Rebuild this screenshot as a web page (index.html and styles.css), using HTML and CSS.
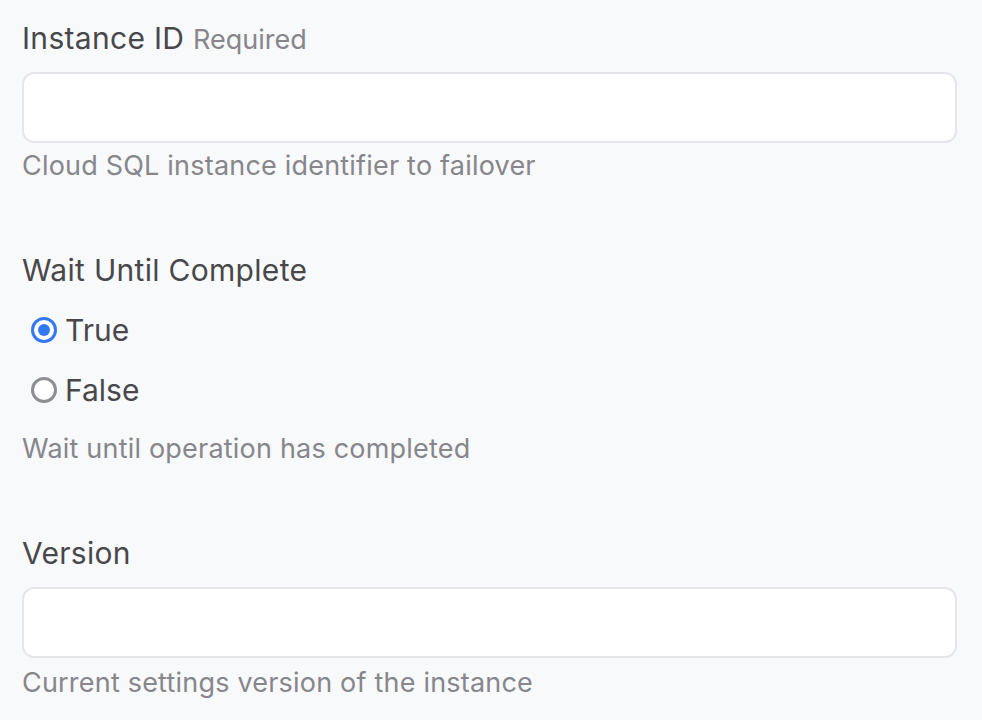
FILE: index.html
```html
<!DOCTYPE html>
<html>
<head>
<meta charset="utf-8">
<link rel="stylesheet" href="styles.css">
</head>
<body>
<form class="form">
  <div class="field">
    <label class="label">Instance ID <span class="req">Required</span></label>
    <input class="input" type="text">
    <div class="help">Cloud SQL instance identifier to failover</div>
  </div>
  <div class="field">
    <div class="label">Wait Until Complete</div>
    <div class="radios">
      <label class="radio"><span class="dot on"></span><span class="rtext">True</span></label>
      <label class="radio"><span class="dot"></span><span class="rtext">False</span></label>
    </div>
    <div class="help">Wait until operation has completed</div>
  </div>
  <div class="field">
    <label class="label">Version</label>
    <input class="input" type="text">
    <div class="help">Current settings version of the instance</div>
  </div>
</form>
</body>
</html>
```
FILE: styles.css
```css
html, body {
  margin: 0;
  padding: 0;
  background: #f8f9fb;
}
body {
  font-family: Inter, "Open Sans", sans-serif;
  color: #48484b;
}
.form {
  padding: 20px 25px 0 22px;
  display: flex;
  flex-direction: column;
  gap: 70px;
}
.field {
  display: flex;
  flex-direction: column;
}
.label {
  font-size: 30px;
  line-height: 36px;
  height: 36px;
  letter-spacing: 0.3px;
  display: block;
}
.req {
  font-size: 27px;
  letter-spacing: 0;
  color: #86868b;
}
.input {
  box-sizing: border-box;
  margin: 16px 0 0 0;
  width: 935px;
  height: 71px;
  border: 2px solid #e6e6ea;
  border-radius: 12px;
  background: #ffffff;
  outline: none;
}
.help {
  margin-top: 7px;
  font-size: 27px;
  line-height: 32px;
  letter-spacing: 0.2px;
  color: #86868b;
}
.radios {
  margin-top: 24px;
  display: flex;
  flex-direction: column;
  gap: 24px;
  padding-left: 9px;
}
.radio {
  display: flex;
  align-items: center;
  height: 36px;
  gap: 8px;
}
.dot {
  box-sizing: border-box;
  width: 26px;
  height: 26px;
  border-radius: 50%;
  border: 3px solid #8e8e93;
  background: #fff;
  position: relative;
}
.dot.on {
  border-color: #3478f6;
}
.dot.on::after {
  content: "";
  position: absolute;
  left: 4px;
  top: 4px;
  width: 12px;
  height: 12px;
  border-radius: 50%;
  background: #3478f6;
}
.rtext {
  font-size: 30px;
  line-height: 36px;
}
.radios + .help {
  margin-top: 25px;
}
.field:last-child .help {
  margin-top: 9px;
}
```
